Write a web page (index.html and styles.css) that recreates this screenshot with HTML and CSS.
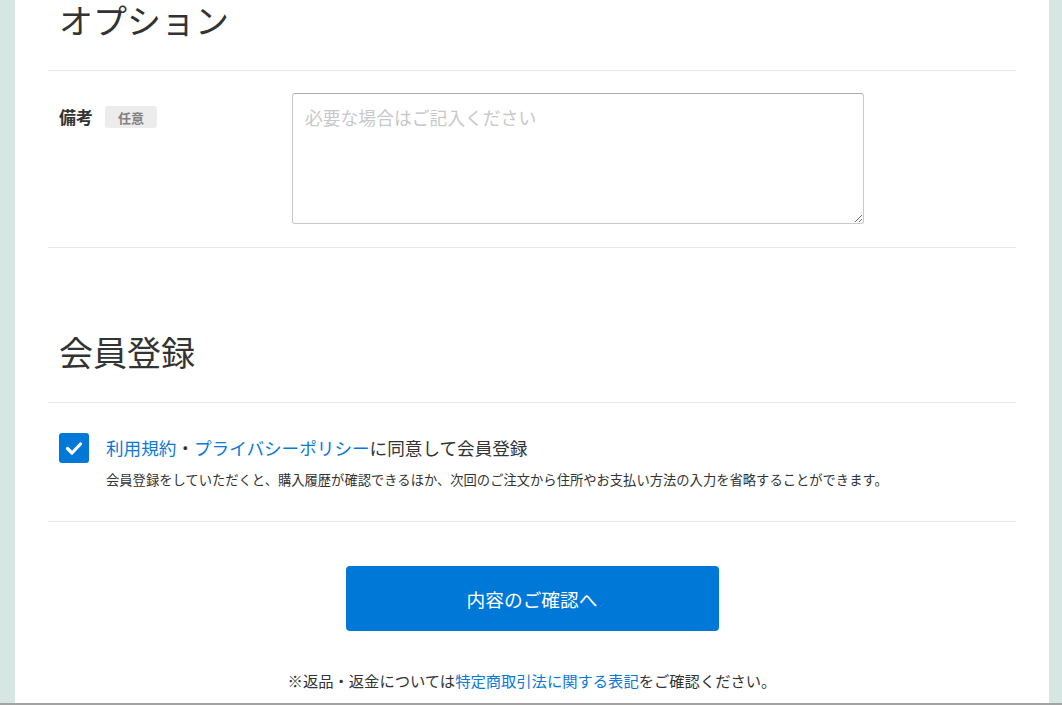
FILE: index.html
```html
<!DOCTYPE html>
<html lang="ja">
<head>
<meta charset="utf-8">
<title>オプション</title>
<link rel="stylesheet" href="styles.css">
</head>
<body>
<main class="page">
  <section class="section">
    <h2 class="section-head">オプション</h2>
    <div class="form-row">
      <div class="form-label">
        <span class="label-text">備考</span>
        <span class="badge">任意</span>
      </div>
      <div class="form-field">
        <textarea class="note" placeholder="必要な場合はご記入ください"></textarea>
      </div>
    </div>
  </section>

  <section class="section member">
    <h2 class="section-head">会員登録</h2>
    <div class="agree-row">
      <span class="checkbox" aria-checked="true">
        <svg viewBox="0 0 30 30" width="30" height="30"><path d="M8.5 15.5 L13 20 L21.5 11" fill="none" stroke="#fff" stroke-width="3.2" stroke-linecap="round" stroke-linejoin="round"/></svg>
      </span>
      <div class="agree-body">
        <p class="agree-text"><a class="link" href="#">利用規約</a>・<a class="link" href="#">プライバシーポリシー</a>に同意して会員登録</p>
        <p class="agree-desc">会員登録をしていただくと、購入履歴が確認できるほか、次回のご注文から住所やお支払い方法の入力を省略することができます。</p>
      </div>
    </div>
  </section>

  <div class="actions">
    <button class="btn-primary" type="button">内容のご確認へ</button>
    <p class="notice">※返品・返金については<a class="link" href="#">特定商取引法に関する表記</a>をご確認ください。</p>
  </div>
</main>
</body>
</html>
```

FILE: styles.css
```css
html, body {
  margin: 0;
  padding: 0;
}

body {
  height: 705px;
  box-sizing: border-box;
  border-bottom: 2px solid #a3a3a3;
  background: #d5e6e3;
  display: flex;
  padding: 0 13px 0 15px;
  overflow: hidden;
  font-family: "Noto Sans CJK JP", "Noto Sans", sans-serif;
  color: #333;
}

.page {
  flex: 1;
  background: #fff;
  padding: 0 33px;
  display: flex;
  flex-direction: column;
}

.section-head {
  margin: 0;
  padding: 0 11px 30px;
  font-size: 34px;
  line-height: 40px;
  font-weight: 400;
  color: #333;
  border-bottom: 1px solid #e8e8e8;
}

.form-row {
  display: flex;
  padding: 22px 11px 23px;
  border-bottom: 1px solid #e8e8e8;
}

.form-label {
  flex: 0 0 233px;
  display: flex;
  align-items: center;
  gap: 12px;
  height: 22px;
  margin-top: 13px;
}

.label-text {
  font-size: 17px;
  font-weight: 700;
  line-height: 22px;
}

.badge {
  display: inline-flex;
  align-items: center;
  justify-content: center;
  width: 52px;
  height: 22px;
  border-radius: 3px;
  background: #ececec;
  color: #808080;
  font-size: 13px;
  font-weight: 700;
}

.form-field {
  flex: 1;
}

.note {
  display: block;
  width: 572px;
  height: 131px;
  box-sizing: border-box;
  border: 1px solid #c9c9c9;
  border-top-color: #ababab;
  border-radius: 3px;
  padding: 10px 12px;
  font-family: inherit;
  font-size: 17.8px;
  line-height: 27px;
  color: #333;
  resize: vertical;
}

.note::placeholder {
  color: #c8c8c8;
}

.member {
  margin-top: 84px;
}

.agree-row {
  display: flex;
  align-items: flex-start;
  gap: 17px;
  padding: 30px 11px 31px;
  border-bottom: 1px solid #e8e8e8;
}

.checkbox {
  flex: 0 0 30px;
  width: 30px;
  height: 30px;
  border-radius: 3px;
  background: #0078d7;
  display: block;
}

.checkbox svg {
  display: block;
}

.agree-body p {
  margin: 0;
}

.agree-text {
  font-size: 17.6px;
  line-height: 27px;
  margin-top: 1px !important;
}

.agree-desc {
  font-size: 13.3px;
  line-height: 20px;
  margin-top: 9px !important;
}

.link {
  color: #0a78d6;
  text-decoration: none;
}

.actions {
  display: flex;
  flex-direction: column;
  align-items: center;
  padding-top: 44px;
}

.btn-primary {
  width: 373px;
  height: 65px;
  border: none;
  border-radius: 4px;
  background: #0078d7;
  color: #fff;
  font-family: inherit;
  font-size: 18.7px;
  cursor: pointer;
}

.notice {
  margin: 38px 0 0;
  font-size: 15.3px;
  line-height: 22px;
}
```
